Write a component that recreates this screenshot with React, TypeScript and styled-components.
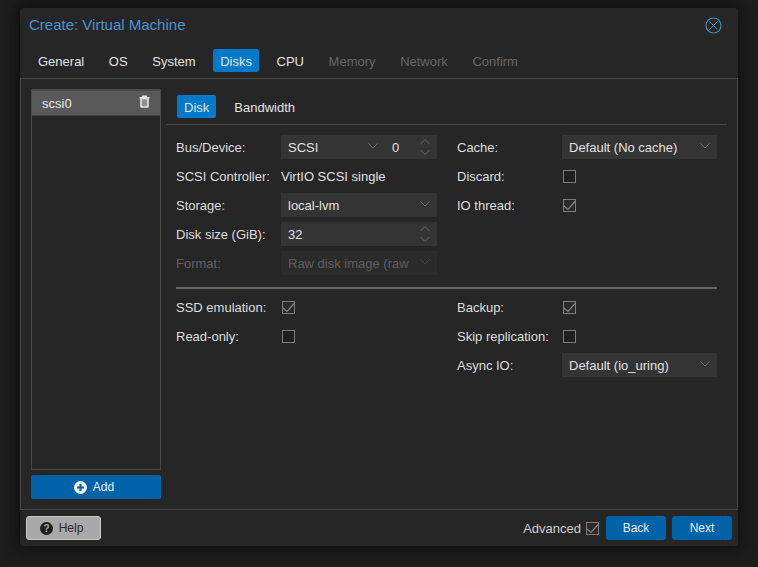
import React from 'react';
import styled, { createGlobalStyle } from 'styled-components';

const Global = createGlobalStyle`
  html, body { margin: 0; padding: 0; background: #1d1d1d; }
  body { font-family: "Liberation Sans", Arial, sans-serif; font-size: 13px; color: #e0e0e0; }
`;

const Page = styled.div`
  width: 758px; height: 567px; box-sizing: border-box; padding: 8px 20px 21px; overflow: hidden; background: #1d1d1d;
`;
const Win = styled.div`
  width: 718px; height: 538px; background: #262626; border-radius: 3px; box-shadow: 0 0 14px 4px #111;
  display: flex; flex-direction: column; position: relative;
`;
const Header = styled.div`
  height: 34px; flex: none; padding: 0 16px 0 9px; display: flex; align-items: center; justify-content: space-between;
`;
const Title = styled.div`
  font-size: 15px; color: #4a94cf; line-height: 18px; margin-top: -1px;
`;
const Close = styled.svg`
  width: 17px; height: 17px; display: block; margin-top: 1px;
`;
const TabBar = styled.div`
  display: flex; flex: none; height: 36px; box-sizing: border-box; padding: 7px 0 0 11px; gap: 3px; align-items: flex-start;
`;
const Tab = styled.div<{ $active?: boolean; $disabled?: boolean }>`
  height: 23px; line-height: 25px; padding: 0 7px; border-radius: 2px; font-size: 13px; margin-right: 7.6px;
  background: ${p => (p.$active ? '#0079c8' : 'transparent')};
  color: ${p => (p.$disabled ? '#666' : '#e3e3e3')};
`;
const Body = styled.div`
  flex: 1; border: 1px solid #474747; display: flex; padding: 10px; gap: 5px; min-height: 0;
`;
const Side = styled.div`
  width: 130px; display: flex; flex-direction: column; gap: 5px; flex: none;
`;
const List = styled.div`
  flex: 1; border: 1px solid #4a4a4a; border-top-width: 2px;
`;
const ListRow = styled.div`
  height: 24px; background: #595959; display: flex; align-items: center; justify-content: space-between; padding: 0 10px 0 10px; color: #e6e6e6; border-bottom: 1px solid #444;
`;
const AddBtn = styled.div`
  height: 24px; background: #0062a8; border-radius: 2px; display: flex; align-items: center; justify-content: center; gap: 6px; font-size: 12px; color: #e8f0f8; flex: none; padding-right: 4px; box-sizing: border-box;
`;
const Main = styled.div`
  flex: 1; display: flex; flex-direction: column; min-width: 0;
`;
const SubTabs = styled.div`
  height: 36px; flex: none; box-sizing: border-box; border-bottom: 1px solid #474747; display: flex; padding: 6px 0 0 11px; gap: 3.4px; align-items: flex-start;
`;
const Form = styled.div`
  padding: 10px 10px 0 10px; display: flex; flex-direction: column;
`;
const Cols = styled.div`
  display: grid; grid-template-columns: 261px 260px; gap: 20px;
`;
const Col = styled.div`
  display: flex; flex-direction: column; gap: 5px;
`;
const Row = styled.div<{ $disabled?: boolean }>`
  height: 24px; display: flex; align-items: center; color: ${p => (p.$disabled ? '#616161' : '#dedede')};
`;
const Label = styled.div`
  width: 105px; flex: none; white-space: nowrap;
`;
const Value = styled.div`
  white-space: nowrap; color: #e0e0e0;
`;
const Field = styled.div<{ $w?: number; $disabled?: boolean }>`
  width: ${p => (p.$w ? `${p.$w}px` : '156px')}; height: 24px; box-sizing: border-box; padding: 0 6px 0 7px;
  background: ${p => (p.$disabled ? '#2b2b2b' : '#343434')};
  color: ${p => (p.$disabled ? '#5e5e5e' : '#e0e0e0')};
  display: flex; align-items: center; justify-content: space-between; white-space: nowrap; overflow: hidden; flex: none;
`;
const Divider = styled.div`
  height: 2px; background: #666; margin: 12px 0 6px;
`;
const Box = styled.svg`
  width: 14px; height: 14px; display: block; flex: none; margin-left: 1px; margin-top: 1px;
`;
const Footer = styled.div`
  height: 36px; flex: none; box-sizing: border-box; display: flex; align-items: center; padding: 0 6px; justify-content: space-between;
`;
const HelpBtn = styled.div`
  width: 75px; height: 24px; box-sizing: border-box; background: #a9a9a9; border: 1px solid #c8c8c8; border-radius: 3px; color: #2a2a2a; font-size: 12px; padding-right: 4px;
  display: flex; align-items: center; justify-content: center; gap: 6px;
`;
const FootRight = styled.div`
  display: flex; align-items: center; gap: 6px;
`;
const AdvLabel = styled.div`
  color: #cfcfcf; margin-right: -2px;
`;
const PrimaryBtn = styled.div`
  width: 60px; height: 24px; background: #0062a8; border-radius: 3px; color: #e8f0f8; font-size: 12px; line-height: 24px; text-align: center;
`;

const Chevron = ({ dim }: { dim?: boolean }) => (
  <svg width="10" height="6" viewBox="0 0 10 6" fill="none" style={{ display: 'block', flex: 'none', marginRight: 1, marginBottom: 2 }}>
    <path d="M0.5 0.5 L5 5 L9.5 0.5" stroke={dim ? '#454545' : '#6a6a6a'} strokeWidth="1" />
  </svg>
);
const Spinner = () => (
  <svg width="10" height="18" viewBox="0 0 10 18" fill="none" style={{ display: 'block', flex: 'none', marginRight: 1 }}>
    <path d="M0.5 6 L5 1.5 L9.5 6 M0.5 12 L5 16.5 L9.5 12" stroke="#6a6a6a" strokeWidth="1" />
  </svg>
);
const Check = ({ checked }: { checked?: boolean }) => (
  <Box viewBox="0 0 14 14" fill="none">
    <rect x="0.5" y="0.5" width="12" height="12" fill={checked ? '#2b2b2b' : '#1f1f1f'} stroke="#7d7d7d" />
    {checked && <path d="M1 7 L5 10.5 L12.5 2" stroke="#858585" strokeWidth="1.2" />}
  </Box>
);
const Trash = () => (
  <svg width="11" height="13" viewBox="0 0 11 13" style={{ display: 'block', marginTop: -3 }}>
    <path d="M3 2 V1 Q3 0.5 3.5 0.5 H7.5 Q8 0.5 8 1 V2 H10.5 V3.4 H0.5 V2 Z" fill="#e6e6e6" />
    <path d="M2 3.5 H9 V11.5 Q9 12 8.5 12 H2.5 Q2 12 2 11.5 Z" fill="#8f8f8f" stroke="#e6e6e6" strokeWidth="1.6" />
  </svg>
);

const Select = ({ v, disabled }: { v: string; disabled?: boolean }) => (
  <Field $disabled={disabled}>{v}<Chevron dim={disabled} /></Field>
);

export default function App() {
  return (
    <>
      <Global />
      <Page>
        <Win>
          <Header>
            <Title>Create: Virtual Machine</Title>
            <Close viewBox="0 0 17 17" fill="none">
              <circle cx="8.5" cy="8.5" r="7.5" stroke="#3b8db5" strokeWidth="1.2" />
              <path d="M4.5 4.5 L12.5 12.5 M12.5 4.5 L4.5 12.5" stroke="#3b8db5" strokeWidth="1" />
            </Close>
          </Header>
          <TabBar>
            <Tab>General</Tab>
            <Tab>OS</Tab>
            <Tab>System</Tab>
            <Tab $active>Disks</Tab>
            <Tab>CPU</Tab>
            <Tab $disabled>Memory</Tab>
            <Tab $disabled>Network</Tab>
            <Tab $disabled>Confirm</Tab>
          </TabBar>
          <Body>
            <Side>
              <List>
                <ListRow>scsi0<Trash /></ListRow>
              </List>
              <AddBtn>
                <svg width="13" height="13" viewBox="0 0 13 13">
                  <circle cx="6.5" cy="6.5" r="6.5" fill="#fff" />
                  <path d="M3 6.5 H10 M6.5 3 V10" stroke="#0062a8" strokeWidth="2" />
                </svg>
                Add
              </AddBtn>
            </Side>
            <Main>
              <SubTabs>
                <Tab $active>Disk</Tab>
                <Tab>Bandwidth</Tab>
              </SubTabs>
              <Form>
                <Cols>
                  <Col>
                    <Row>
                      <Label>Bus/Device:</Label>
                      <Field $w={104}>SCSI<Chevron /></Field>
                      <Field $w={52}>0<Spinner /></Field>
                    </Row>
                    <Row><Label>SCSI Controller:</Label><Value>VirtIO SCSI single</Value></Row>
                    <Row><Label>Storage:</Label><Select v="local-lvm" /></Row>
                    <Row><Label>Disk size (GiB):</Label><Field>32<Spinner /></Field></Row>
                    <Row $disabled><Label>Format:</Label><Select v="Raw disk image (raw" disabled /></Row>
                  </Col>
                  <Col>
                    <Row><Label>Cache:</Label><Field $w={155}>Default (No cache)<Chevron /></Field></Row>
                    <Row><Label>Discard:</Label><Check /></Row>
                    <Row><Label>IO thread:</Label><Check checked /></Row>
                  </Col>
                </Cols>
                <Divider />
                <Cols>
                  <Col>
                    <Row><Label>SSD emulation:</Label><Check checked /></Row>
                    <Row><Label>Read-only:</Label><Check /></Row>
                  </Col>
                  <Col>
                    <Row><Label>Backup:</Label><Check checked /></Row>
                    <Row><Label>Skip replication:</Label><Check /></Row>
                    <Row><Label>Async IO:</Label><Field $w={155}>Default (io_uring)<Chevron /></Field></Row>
                  </Col>
                </Cols>
              </Form>
            </Main>
          </Body>
          <Footer>
            <HelpBtn>
              <svg width="13" height="13" viewBox="0 0 13 13">
                <circle cx="6.5" cy="6.5" r="6.5" fill="#1c1c1c" />
                <text x="6.5" y="10.3" textAnchor="middle" fontSize="10.5" fontWeight="700" fontFamily="Liberation Sans" fill="#a9a9a9">?</text>
              </svg>
              Help
            </HelpBtn>
            <FootRight>
              <AdvLabel>Advanced</AdvLabel>
              <Check checked />
              <PrimaryBtn>Back</PrimaryBtn>
              <PrimaryBtn>Next</PrimaryBtn>
            </FootRight>
          </Footer>
        </Win>
      </Page>
    </>
  );
}
